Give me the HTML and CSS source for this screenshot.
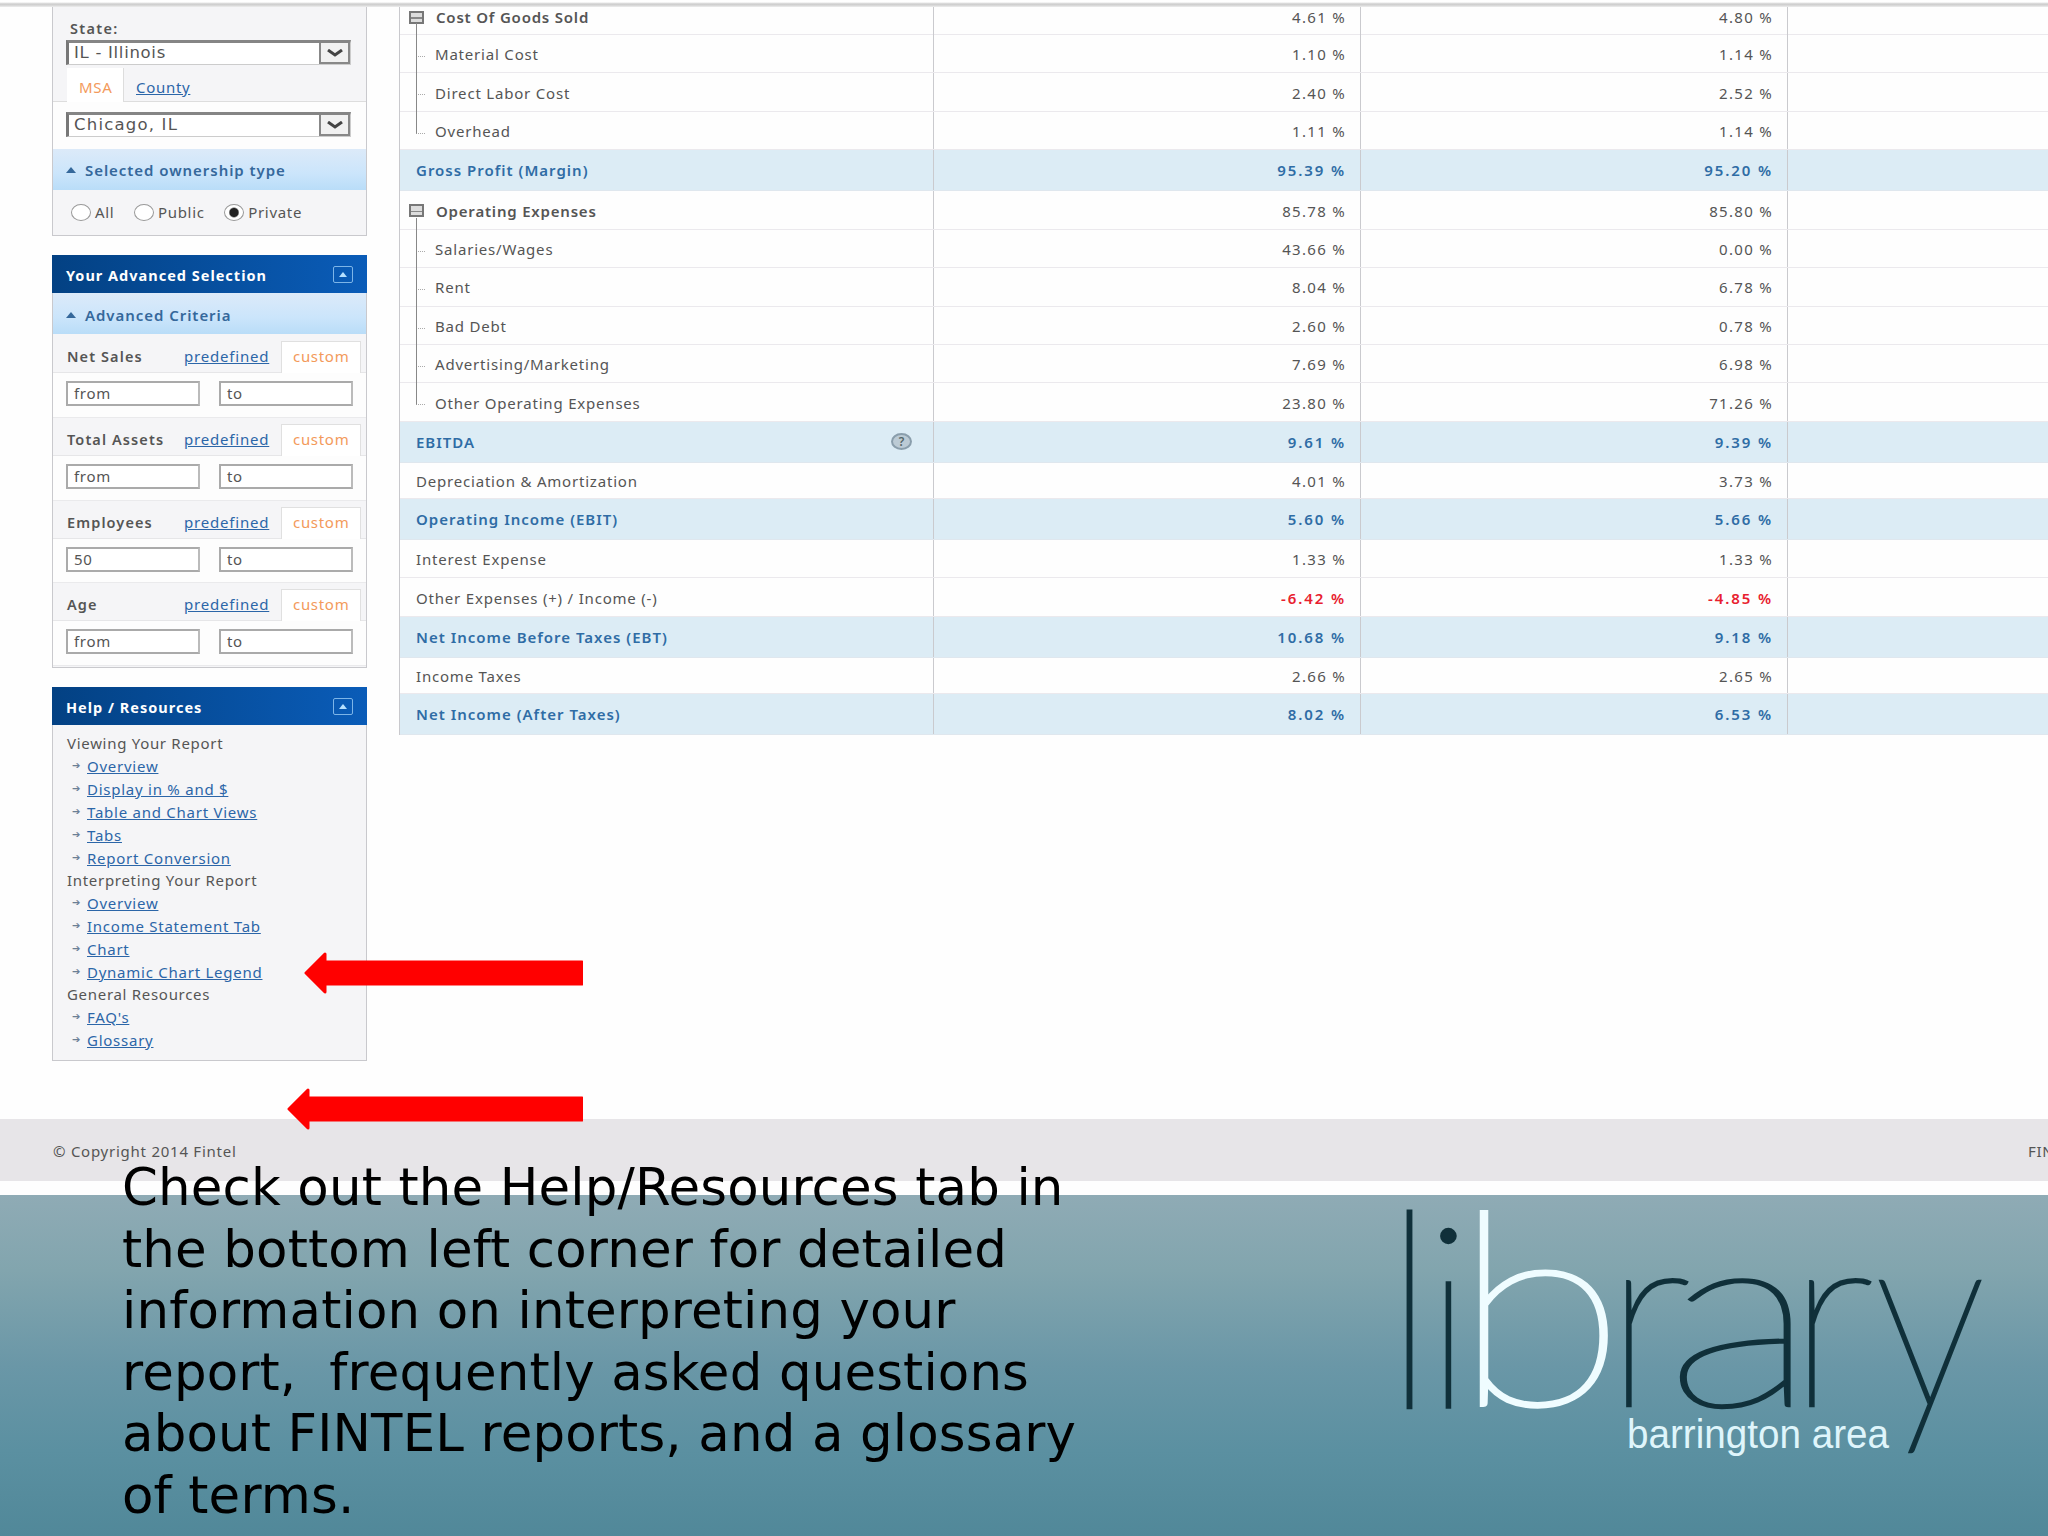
FILE: index.html
```html
<!DOCTYPE html>
<html lang="en">
  <head>
    <meta charset="UTF-8" />
    <title>Fintel Report | Barrington Area Library</title>
    <link rel="stylesheet" href="styles.css">
  </head>

  <body>
    <div class="slide">
      <div class="browser">
        <div class="topbar"></div>

        <div class="content">
          <aside class="sidebar">
            <div class="panel panel-location">
              <label class="field-label">State:</label>
              <div class="select">
                <span>IL - Illinois</span>
                <i class="select-arrow"><svg viewBox="0 0 16 8"><path d="M1 1 L8 6 L15 1" /></svg></i>
              </div>
              <div class="geo-tabs">
                <span class="tab active">MSA</span>
                <a href="#" class="tab">County</a>
              </div>
              <div class="geo-body">
                <div class="select">
                  <span>Chicago, IL</span>
                  <i class="select-arrow"><svg viewBox="0 0 16 8"><path d="M1 1 L8 6 L15 1" /></svg></i>
                </div>
              </div>
              <div class="subhead"><i class="tri"></i>Selected ownership type</div>
              <div class="radios">
                <span class="radio r-all"><i></i>All</span>
                <span class="radio r-public"><i></i>Public</span>
                <span class="radio checked"><i></i>Private</span>
              </div>
            </div>

            <div class="panel panel-criteria">
              <div class="panel-head">Your Advanced Selection<i class="toggle"></i></div>
              <div class="subhead"><i class="tri"></i>Advanced Criteria</div>

              <div class="criteria-head"><b>Net Sales</b><a href="#">predefined</a><span>custom</span></div>
              <div class="criteria-body"><div class="input">from</div><div class="input">to</div></div>

              <div class="criteria-head"><b>Total Assets</b><a href="#">predefined</a><span>custom</span></div>
              <div class="criteria-body"><div class="input">from</div><div class="input">to</div></div>

              <div class="criteria-head"><b>Employees</b><a href="#">predefined</a><span>custom</span></div>
              <div class="criteria-body"><div class="input">50</div><div class="input">to</div></div>

              <div class="criteria-head"><b>Age</b><a href="#">predefined</a><span>custom</span></div>
              <div class="criteria-body"><div class="input">from</div><div class="input">to</div></div>
            </div>

            <div class="panel panel-help">
              <div class="panel-head">Help / Resources<i class="toggle"></i></div>
              <div class="help-body">
                <h4>Viewing Your Report</h4>
                <ul>
                  <li><a href="#">Overview</a></li>
                  <li><a href="#">Display in % and $</a></li>
                  <li><a href="#">Table and Chart Views</a></li>
                  <li><a href="#">Tabs</a></li>
                  <li><a href="#">Report Conversion</a></li>
                </ul>
                <h4>Interpreting Your Report</h4>
                <ul>
                  <li><a href="#">Overview</a></li>
                  <li><a href="#">Income Statement Tab</a></li>
                  <li><a href="#">Chart</a></li>
                  <li><a href="#">Dynamic Chart Legend</a></li>
                </ul>
                <h4>General Resources</h4>
                <ul>
                  <li><a href="#">FAQ's</a></li>
                  <li><a href="#">Glossary</a></li>
                </ul>
              </div>
            </div>
          </aside>

          <div class="report">
            <div class="row first parent"><div class="name"><i class="box"></i>Cost Of Goods Sold</div><div class="num">4.61 %</div><div class="num">4.80 %</div></div>
            <div class="row child"><div class="name">Material Cost</div><div class="num">1.10 %</div><div class="num">1.14 %</div></div>
            <div class="row child"><div class="name">Direct Labor Cost</div><div class="num">2.40 %</div><div class="num">2.52 %</div></div>
            <div class="row child last"><div class="name">Overhead</div><div class="num">1.11 %</div><div class="num">1.14 %</div></div>
            <div class="row total"><div class="name">Gross Profit (Margin)</div><div class="num">95.39 %</div><div class="num">95.20 %</div></div>
            <div class="row parent"><div class="name"><i class="box"></i>Operating Expenses</div><div class="num">85.78 %</div><div class="num">85.80 %</div></div>
            <div class="row child"><div class="name">Salaries/Wages</div><div class="num">43.66 %</div><div class="num">0.00 %</div></div>
            <div class="row child"><div class="name">Rent</div><div class="num">8.04 %</div><div class="num">6.78 %</div></div>
            <div class="row child"><div class="name">Bad Debt</div><div class="num">2.60 %</div><div class="num">0.78 %</div></div>
            <div class="row child"><div class="name">Advertising/Marketing</div><div class="num">7.69 %</div><div class="num">6.98 %</div></div>
            <div class="row child last"><div class="name">Other Operating Expenses</div><div class="num">23.80 %</div><div class="num">71.26 %</div></div>
            <div class="row total"><div class="name">EBITDA<i class="help">?</i></div><div class="num">9.61 %</div><div class="num">9.39 %</div></div>
            <div class="row short"><div class="name">Depreciation &amp; Amortization</div><div class="num">4.01 %</div><div class="num">3.73 %</div></div>
            <div class="row total"><div class="name">Operating Income (EBIT)</div><div class="num">5.60 %</div><div class="num">5.66 %</div></div>
            <div class="row"><div class="name">Interest Expense</div><div class="num">1.33 %</div><div class="num">1.33 %</div></div>
            <div class="row"><div class="name">Other Expenses (+) / Income (-)</div><div class="num negative">-6.42 %</div><div class="num negative">-4.85 %</div></div>
            <div class="row total"><div class="name">Net Income Before Taxes (EBT)</div><div class="num">10.68 %</div><div class="num">9.18 %</div></div>
            <div class="row short"><div class="name">Income Taxes</div><div class="num">2.66 %</div><div class="num">2.65 %</div></div>
            <div class="row total"><div class="name">Net Income (After Taxes)</div><div class="num">8.02 %</div><div class="num">6.53 %</div></div>
          </div>
        </div>

        <footer class="footer">
          <span>© Copyright 2014 Fintel</span>
          <span class="footer-right">FIN</span>
        </footer>
      </div>

      <div class="banner">
        <svg class="logo" viewBox="0 0 620 270" width="620" height="270">
          <g class="logo-dark">
            <text class="logo-l" x="-19" y="213">l</text>
            <text x="22" y="213">i</text>
            <text x="204" y="211">r</text>
            <text x="265" y="211" textLength="152" lengthAdjust="spacingAndGlyphs">a</text>
            <text x="387" y="211">r</text>
            <text x="474" y="211" textLength="112" lengthAdjust="spacingAndGlyphs">y</text>
          </g>
          <text class="logo-b" x="53" y="210" textLength="172" lengthAdjust="spacingAndGlyphs">b</text>
          <text class="logo-sub" x="227" y="253" textLength="262" lengthAdjust="spacingAndGlyphs">barrington area</text>
        </svg>
      </div>

      <p class="caption">Check out the Help/Resources tab in<br>the bottom left corner for detailed<br>information on interpreting your<br>report,&nbsp; frequently asked questions<br>about FINTEL reports, and a glossary<br>of terms.</p>

      <svg class="arrow arrow-1" viewBox="0 0 279 42"><path d="M2 21 L21 2 V10 H278 V32 H21 V40 Z" /></svg>
      <svg class="arrow arrow-2" viewBox="0 0 296 42"><path d="M2 21 L21 2 V10 H295 V32 H21 V40 Z" /></svg>
    </div>
  </body>
</html>
```

FILE: styles.css
```css
:root {
  --text: #555;
  --link: #2c66a8;
  --orange: #f39a5b;
  --border: #c9c9cd;
  --total-bg: #dcecf5;
}

* {
  box-sizing: border-box;
  margin: 0;
  padding: 0;
}

body {
  background: #fff;
  color: var(--text);
  font-family: "Noto Sans", "Open Sans", sans-serif;
  font-size: 15px;
}

a {
  color: var(--link);
}

i {
  font-style: normal;
}

.slide {
  position: relative;
  width: 2048px;
  height: 1536px;
  overflow: hidden;
}

.browser {
  height: 1195px;
  display: flex;
  flex-direction: column;
  background: #fefefe;
}

.topbar {
  height: 7px;
  background: linear-gradient(#fff 2px, #cdcdcd 4px, #d2d2d2 5px, #eee);
}

.content {
  display: flex;
  height: 1112px;
}

/* Sidebar */
.sidebar {
  width: 315px;
  margin-left: 52px;
  letter-spacing: 0.7px;
}

.panel {
  border: 1px solid var(--border);
  background: #f5f5f7;
}

.panel-location {
  height: 229px;
  border-top: none;
}

.field-label {
  display: block;
  height: 33px;
  padding: 11px 0 0 17px;
  line-height: 20px;
  font-size: 14.5px;
  font-weight: 600;
  letter-spacing: 1.3px;
}

.select {
  width: 285px;
  height: 25px;
  margin-left: 13px;
  padding-left: 5px;
  display: flex;
  justify-content: space-between;
  border: 1px solid #ccc;
  border-top: 3px solid #858585;
  border-left: 3px solid #777;
  background: #fff;
  color: #555;
  font-family: "DejaVu Sans", sans-serif;
  font-size: 16.5px;
  line-height: 20px;
}

.geo-body .select {
  letter-spacing: 1.2px;
}

.select-arrow {
  width: 31px;
  border: 2px solid #888;
  border-top: none;
  background: #f1f1f1;
  display: flex;
  align-items: center;
  justify-content: center;
}

.select-arrow svg {
  width: 16px;
  height: 8px;
  fill: none;
  stroke: #444;
  stroke-width: 3;
}

.geo-tabs {
  height: 37px;
  padding-left: 14px;
  display: flex;
  align-items: flex-end;
  border-bottom: 1px solid #ddd;
}

.tab {
  height: 30px;
  padding-left: 12px;
  line-height: 32px;
  font-size: 15px;
}

.tab.active {
  width: 57px;
  height: 34px;
  margin-bottom: -1px;
  line-height: 39px;
  background: #fff;
  border-right: 1px solid #ddd;
  color: var(--orange);
}

.geo-body {
  height: 47px;
  padding-top: 10px;
  background: #fdfdfd;
}

.subhead {
  height: 41px;
  padding-left: 13px;
  display: flex;
  align-items: center;
  background: linear-gradient(#dceaf9, #cbe5fb 60%, #b9ddf8);
  color: #35689b;
  font-size: 15px;
  font-weight: 600;
  letter-spacing: 0.95px;
}

.tri {
  margin-right: 9px;
  border: 5px solid transparent;
  border-top: none;
  border-bottom: 6px solid #35689b;
}

.radios {
  display: flex;
  height: 44px;
  padding-left: 18px;
  align-items: center;
}

.radio {
  display: flex;
  align-items: center;
}

.radio i {
  width: 20px;
  height: 17px;
  margin-right: 4px;
  border: 1.5px solid #999;
  border-radius: 50%;
  background: #fff;
}

.radio.checked i {
  background: radial-gradient(circle, #222 4px, #fff 5.5px);
}

.r-all,
.r-public {
  margin-right: 19.5px;
}

.panel-head {
  height: 38px;
  margin: 0 -1px;
  padding: 2px 14px 0 14px;
  display: flex;
  align-items: center;
  justify-content: space-between;
  background: linear-gradient(90deg, #034183, #0a5cb8);
  color: #fff;
  font-size: 14.5px;
  font-weight: 700;
  letter-spacing: 1px;
}

.toggle {
  width: 20px;
  height: 17px;
  margin-top: -2px;
  border: 1.5px solid #7db5e8;
  border-radius: 2px;
  display: flex;
  align-items: center;
  justify-content: center;
}

.toggle::before {
  content: "";
  border: 4px solid transparent;
  border-top: none;
  border-bottom: 5px solid #b5e0ff;
}

.panel-criteria {
  height: 413px;
  margin-top: 19px;
  border-top: none;
}

.panel-criteria .subhead {
  padding-top: 2px;
  margin-bottom: 1px;
}

.criteria-head {
  height: 38px;
  padding: 6px 5px 0 14px;
  display: flex;
  border-bottom: 1px solid #e6e6e8;
  line-height: 30px;
}

.criteria-head b {
  width: 117px;
  font-size: 14.5px;
  font-weight: 600;
  letter-spacing: 1.1px;
  white-space: nowrap;
}

.criteria-head a {
  width: 97px;
  letter-spacing: 0.8px;
}

.criteria-head span {
  flex: 1;
  height: 32px;
  padding-left: 11px;
  background: #fff;
  border: 1px solid #e0e0e0;
  border-bottom: none;
  color: var(--orange);
  line-height: 28px;
}

.criteria-body {
  height: 44.8px;
  padding: 8px 0 0 13px;
  display: flex;
  gap: 19px;
  background: #fdfdfd;
  border-bottom: 1px solid #eaeaec;
}

.input {
  width: 134px;
  height: 25px;
  padding-left: 6px;
  border: 2px solid #aaa;
  border-right-color: #bbb;
  background: #fff;
  line-height: 20px;
}

.panel-help {
  height: 374px;
  margin-top: 19px;
  border-top: none;
}

.help-body {
  padding: 7px 0 0 14px;
}

.help-body h4 {
  font-size: 15px;
  font-weight: 400;
  line-height: 22px;
}

.help-body ul {
  list-style: none;
}

.help-body li {
  height: 23px;
  display: flex;
  align-items: center;
  letter-spacing: 0.75px;
}

.help-body li::before {
  content: "➔";
  width: 15px;
  margin-left: 5px;
  font-family: "DejaVu Sans", sans-serif;
  font-size: 10px;
  letter-spacing: 0;
  color: #6b7f95;
}

/* Income statement */
.report {
  width: 1649px;
  height: 728px;
  margin-left: 32px;
  border-left: 1px solid var(--border);
  letter-spacing: 0.8px;
}

.row {
  height: 38.4px;
  display: grid;
  grid-template-columns: 534px 427px 427px;
  border-bottom: 1.5px solid #ebe9ed;
}

.row > div {
  padding-top: 1px;
  display: flex;
  align-items: center;
  border-right: 1px solid #cacace;
}

.row.first {
  height: 28px;
}

.row.first > div {
  padding-top: 0;
  padding-bottom: 11px;
}

.row.short {
  height: 36px;
}

.row .name {
  position: relative;
  padding-left: 16px;
}

.row .num {
  justify-content: flex-end;
  padding-right: 14px;
  letter-spacing: 1.3px;
}

.row.total {
  height: 41.2px;
  background: var(--total-bg);
  border-bottom-color: #dfe7ee;
  color: #2f6ca5;
  font-weight: 600;
  letter-spacing: 1px;
}

.row.total > div {
  padding-top: 0;
}

.row.total .num,
.row .num.negative {
  letter-spacing: 1.9px;
}

.row.parent .name {
  padding-left: 9px;
  font-weight: 600;
}

.box {
  width: 15px;
  height: 13px;
  margin-right: 12px;
  border: 2px solid #777;
  background: linear-gradient(#ddd 50%, #888 50%, #888 70%, #ddd 70%);
}

.row.child .name {
  padding-left: 35px;
}

/* tree connectors */
.row.child .name::before {
  content: "";
  position: absolute;
  left: 16px;
  top: -12px;
  width: 8px;
  height: 33px;
  border-left: 1px solid #888;
  border-bottom: 1px dotted #aaa;
}

.row.child:not(.last) .name::after {
  content: "";
  position: absolute;
  left: 16px;
  top: 20px;
  height: 20px;
  border-left: 1px solid #888;
}

.help {
  width: 21px;
  height: 17px;
  margin: -1px 21px 0 auto;
  border: 2px solid #8a9eac;
  border-radius: 50%;
  background: #bccbd5;
  color: #566;
  font-size: 12px;
  line-height: 13px;
  text-align: center;
  letter-spacing: 0;
}

.row .negative {
  color: #e8202e;
  font-weight: 600;
}

.footer {
  height: 62px;
  padding: 1px 0 0 53px;
  display: flex;
  align-items: center;
  justify-content: space-between;
  overflow: hidden;
  background: #e7e5e8;
  font-size: 15px;
  letter-spacing: 0.75px;
}

.footer-right {
  width: 20px;
  white-space: nowrap;
}

.banner {
  height: 341px;
  padding-left: 1400px;
  background: linear-gradient(#8fabb5, #82a5ae 22%, #6a97a7 50%, #5b90a1 75%, #518899);
}

.logo {
  display: block;
  overflow: visible;
  font-family: Lato, sans-serif;
}

.logo-dark {
  fill: #10303a;
  stroke: #10303a;
  stroke-width: 2.5px;
  font-size: 254px;
  font-weight: 100;
}

.logo-l {
  font-size: 274px;
}

.logo-b {
  fill: #effcff;
  stroke: #effcff;
  stroke-width: 4px;
  font-size: 268px;
  font-weight: 100;
}

.logo-sub {
  fill: #dff5fb;
  font-family: "Liberation Sans", sans-serif;
  font-size: 40px;
}

.caption {
  position: absolute;
  left: 122px;
  top: 1157px;
  color: #000;
  font-family: "DejaVu Sans", Verdana, sans-serif;
  font-size: 51.4px;
  line-height: 61.5px;
  letter-spacing: 0.15px;
  white-space: nowrap;
}

.arrow {
  position: absolute;
  height: 42px;
  fill: #f00;
  stroke: #f00;
  stroke-width: 3;
  stroke-linejoin: round;
}

.arrow-1 {
  left: 304px;
  top: 952px;
  width: 279px;
}

.arrow-2 {
  left: 287px;
  top: 1088px;
  width: 296px;
}
```
